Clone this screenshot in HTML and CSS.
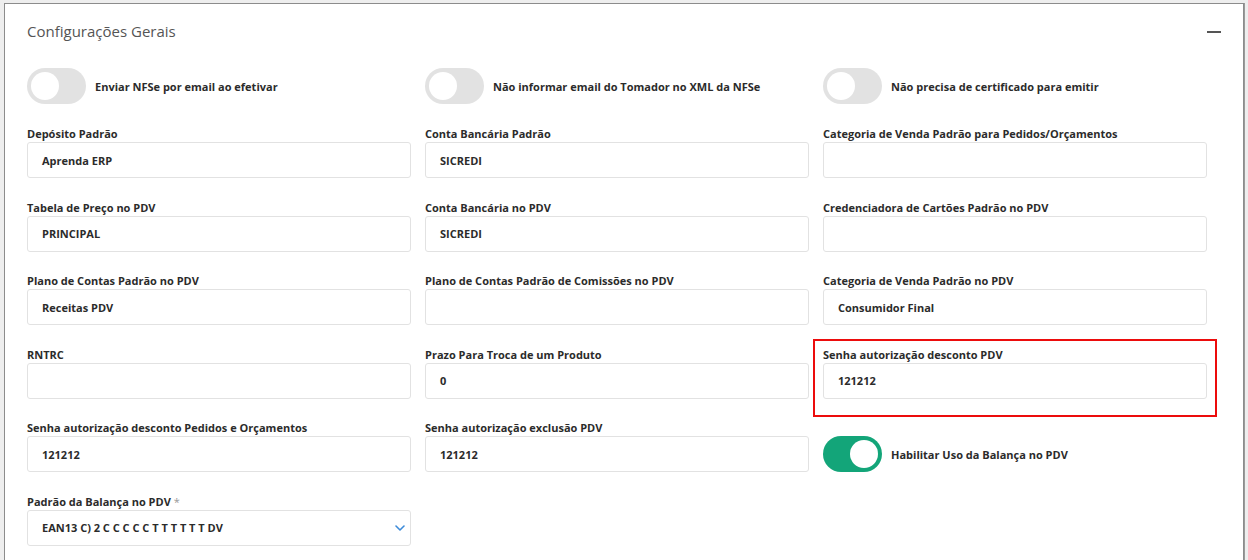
FILE: index.html
```html
<!DOCTYPE html>
<html lang="pt-BR">
<head>
<meta charset="utf-8">
<title>Configurações Gerais</title>
<link rel="stylesheet" href="styles.css">
</head>
<body>
<div class="card">
  <div class="card-header">
    <span class="card-title">Configurações Gerais</span>
    <span class="collapse-btn" aria-label="Recolher"></span>
  </div>
  <div class="toggles">
    <label class="switch-field"><span class="switch"><span class="knob"></span></span><span class="switch-label">Enviar NFSe por email ao efetivar</span></label>
    <label class="switch-field"><span class="switch"><span class="knob"></span></span><span class="switch-label">Não informar email do Tomador no XML da NFSe</span></label>
    <label class="switch-field"><span class="switch"><span class="knob"></span></span><span class="switch-label">Não precisa de certificado para emitir</span></label>
  </div>
  <div class="grid">
    <div class="field"><div class="label">Depósito Padrão</div><div class="input">Aprenda ERP</div></div>
    <div class="field"><div class="label">Conta Bancária Padrão</div><div class="input">SICREDI</div></div>
    <div class="field"><div class="label">Categoria de Venda Padrão para Pedidos/Orçamentos</div><div class="input"></div></div>

    <div class="field"><div class="label">Tabela de Preço no PDV</div><div class="input">PRINCIPAL</div></div>
    <div class="field"><div class="label">Conta Bancária no PDV</div><div class="input">SICREDI</div></div>
    <div class="field"><div class="label">Credenciadora de Cartões Padrão no PDV</div><div class="input"></div></div>

    <div class="field"><div class="label">Plano de Contas Padrão no PDV</div><div class="input">Receitas PDV</div></div>
    <div class="field"><div class="label">Plano de Contas Padrão de Comissões no PDV</div><div class="input"></div></div>
    <div class="field"><div class="label">Categoria de Venda Padrão no PDV</div><div class="input">Consumidor Final</div></div>

    <div class="field"><div class="label">RNTRC</div><div class="input"></div></div>
    <div class="field"><div class="label">Prazo Para Troca de um Produto</div><div class="input">0</div></div>
    <div class="field highlighted"><div class="label">Senha autorização desconto PDV</div><div class="input">121212</div></div>

    <div class="field"><div class="label">Senha autorização desconto Pedidos e Orçamentos</div><div class="input">121212</div></div>
    <div class="field"><div class="label">Senha autorização exclusão PDV</div><div class="input">121212</div></div>
    <div class="field field-switch"><label class="switch-field"><span class="switch on"><span class="knob"></span></span><span class="switch-label">Habilitar Uso da Balança no PDV</span></label></div>

    <div class="field"><div class="label">Padrão da Balança no PDV <span class="req">*</span></div>
      <div class="input select">EAN13 C) 2 C C C C C T T T T T T DV
        <svg class="chevron" width="10" height="6" viewBox="0 0 10 6"><path d="M1 1 L5 5 L9 1" fill="none" stroke="#3d8bd9" stroke-width="1.6" stroke-linecap="round" stroke-linejoin="round"/></svg>
      </div>
    </div>
  </div>
</div>
</body>
</html>
```

FILE: styles.css
```css
html, body {
  margin: 0;
  padding: 0;
}
body {
  background: #eeeeee;
  font-family: "Open Sans", "Noto Sans", sans-serif;
  color: #2b2b2b;
  padding: 3px 0 0 4px;
  height: 560px;
  overflow: hidden;
  box-sizing: border-box;
}
.card {
  width: 1240px;
  box-sizing: border-box;
  background: #fff;
  border: 1px solid #8c8c8c;
  box-shadow: 1px 0 0 #9a9a9a;
  padding: 17px 22px 40px 22px;
  min-height: 600px;
}
.card-header {
  display: flex;
  justify-content: space-between;
  align-items: center;
  height: 20px;
}
.card-title {
  font-size: 15px;
  line-height: 20px;
  color: #555;
}
.collapse-btn {
  width: 14px;
  height: 2px;
  background: #555;
  margin-top: 1px;
}
.toggles {
  margin-top: 27px;
  display: grid;
  grid-template-columns: repeat(3, 384px);
  column-gap: 14px;
}
.switch-field {
  display: flex;
  align-items: center;
  gap: 9px;
}
.switch {
  width: 59px;
  height: 36px;
  border-radius: 18px;
  background: #e2e2e2;
  position: relative;
  flex: none;
}
.switch .knob {
  position: absolute;
  top: 4px;
  left: 4px;
  width: 28px;
  height: 28px;
  border-radius: 50%;
  background: #fff;
}
.switch.on {
  background: #13a579;
}
.switch.on .knob {
  left: auto;
  right: 4px;
}
.switch-label {
  font-size: 11px;
  font-weight: 700;
  color: #2b2b2b;
}
.grid {
  margin-top: 23px;
  display: grid;
  grid-template-columns: repeat(3, 384px);
  column-gap: 14px;
  row-gap: 22.5px;
}
.field {
  position: relative;
}
.label {
  font-size: 11px;
  font-weight: 700;
  line-height: 14px;
  margin-bottom: 1px;
  color: #2b2b2b;
}
.req {
  color: #999;
  font-weight: 400;
}
.input {
  height: 36px;
  box-sizing: border-box;
  border: 1px solid #e2e2e2;
  border-radius: 3px;
  padding: 0 14px;
  display: flex;
  align-items: center;
  font-size: 11px;
  font-weight: 700;
  color: #2b2b2b;
}
.select {
  justify-content: space-between;
  padding-right: 5px;
}
.chevron {
  flex: none;
}
.field-switch {
  padding-top: 15px;
}
.highlighted::after {
  content: "";
  position: absolute;
  left: -10px;
  top: -9px;
  right: -10px;
  bottom: -18px;
  border: 2px solid #ec0c0c;
  pointer-events: none;
}
```
